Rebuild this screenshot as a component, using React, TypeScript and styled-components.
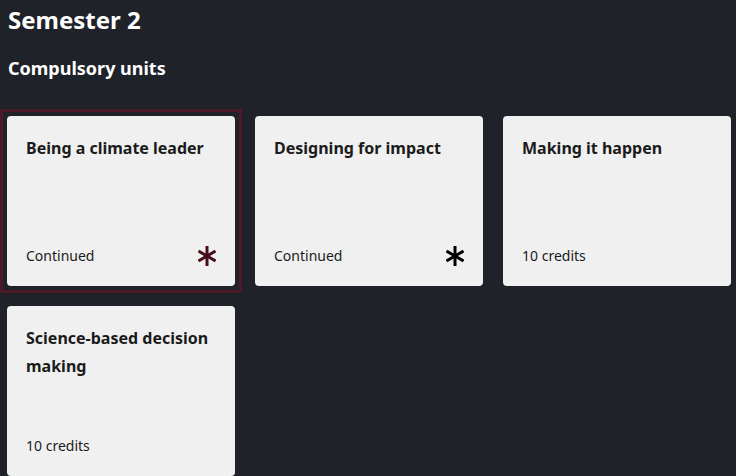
import React from "react";
import styled, { createGlobalStyle, css } from "styled-components";

const GlobalStyle = createGlobalStyle`
  body {
    margin: 0;
    background: #202229;
    font-family: "Noto Sans", "Open Sans", sans-serif;
  }
`;

const Page = styled.div`
  padding: 0 7px;
  height: 476px;
  overflow: hidden;
  color: #ffffff;
`;

const Title = styled.h1`
  margin: 0;
  padding: 4px 1px 0;
  font-size: 24px;
  line-height: 32px;
  font-weight: 700;
`;

const Subtitle = styled.h2`
  margin: 0;
  padding: 19px 1px 0;
  font-size: 18px;
  line-height: 26px;
  font-weight: 700;
`;

const Grid = styled.div`
  display: grid;
  grid-template-columns: repeat(3, 228px);
  column-gap: 20px;
  row-gap: 20px;
  margin-top: 35px;
`;

const Card = styled.div<{ $selected?: boolean }>`
  position: relative;
  height: 170px;
  box-sizing: border-box;
  padding: 18px 19px 20px 19px;
  background: #f0f0f0;
  border-radius: 4px;
  color: #1b1b1b;
  display: flex;
  flex-direction: column;
  justify-content: space-between;

  ${(p) =>
    p.$selected &&
    css`
      &::before {
        content: "";
        position: absolute;
        inset: -7px;
        border: 3px solid #4b1a26;
        pointer-events: none;
      }
    `}
`;

const CardTitle = styled.div`
  font-size: 16px;
  line-height: 28px;
  font-weight: 700;
`;

const Footer = styled.div`
  display: flex;
  align-items: center;
  justify-content: space-between;
  font-size: 14px;
  line-height: 20px;
  height: 20px;
`;

const Star: React.FC<{ color: string }> = ({ color }) => (
  <svg width="18" height="20" viewBox="0 0 18 20">
    <g stroke={color} strokeWidth="3" strokeLinecap="butt">
      <line x1="9" y1="0" x2="9" y2="20" />
      <line x1="0.5" y1="5" x2="17.5" y2="15" />
      <line x1="0.5" y1="15" x2="17.5" y2="5" />
    </g>
  </svg>
);

type Unit = {
  title: string;
  footer: string;
  star?: string;
  selected?: boolean;
};

const units: Unit[] = [
  { title: "Being a climate leader", footer: "Continued", star: "#4a0b1b", selected: true },
  { title: "Designing for impact", footer: "Continued", star: "#000000" },
  { title: "Making it happen", footer: "10 credits" },
  { title: "Science-based decision making", footer: "10 credits" },
];

const App: React.FC = () => {
  return (
    <>
      <GlobalStyle />
      <Page>
        <Title>Semester 2</Title>
        <Subtitle>Compulsory units</Subtitle>
        <Grid>
          {units.map((u) => (
            <Card key={u.title} $selected={u.selected}>
              <CardTitle>{u.title}</CardTitle>
              <Footer>
                <span>{u.footer}</span>
                {u.star && <Star color={u.star} />}
              </Footer>
            </Card>
          ))}
        </Grid>
      </Page>
    </>
  );
};

export default App;
